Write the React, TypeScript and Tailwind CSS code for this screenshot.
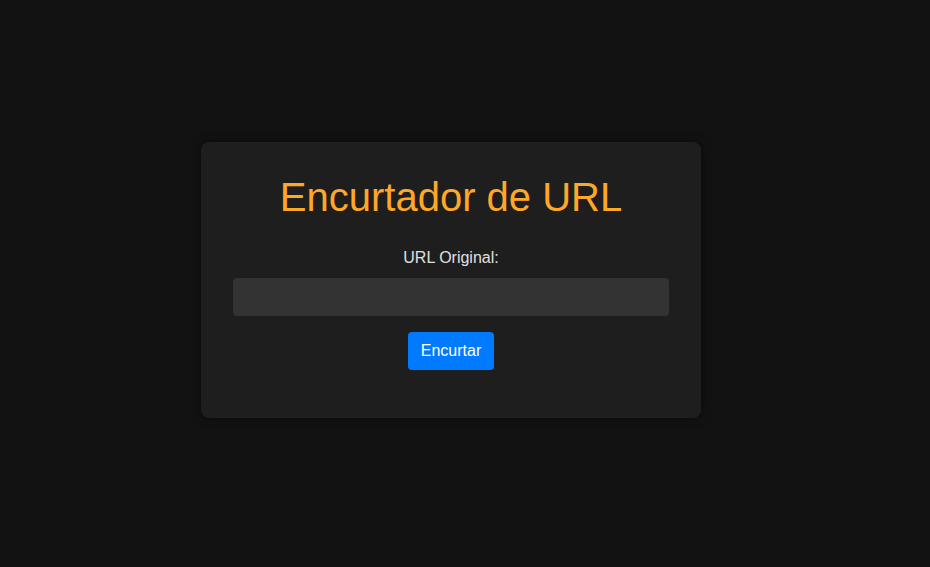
import React, { useState } from 'react';

const UrlShortener: React.FC = () => {
  const [url, setUrl] = useState('');

  return (
    <div className="w-[500px] rounded-lg bg-[#1e1e1e] px-8 pt-8 pb-12 text-center shadow-[0_0_10px_rgba(0,0,0,0.5)]">
      <h1 className="text-[40px] leading-[46px] text-[#ffa726]">Encurtador de URL</h1>
      <form className="mt-[29px] flex flex-col items-center" onSubmit={(e) => e.preventDefault()}>
        <label htmlFor="url" className="text-base leading-[18px] text-[#e0e0e0]">
          URL Original:
        </label>
        <input
          id="url"
          type="text"
          value={url}
          onChange={(e) => setUrl(e.target.value)}
          className="mt-[11px] h-[38px] w-full rounded bg-[#333333] px-2.5 text-base text-white outline-none"
        />
        <button
          type="submit"
          className="mt-4 h-[38px] rounded bg-[#007bff] px-[13px] text-base leading-[18px] text-white"
        >
          Encurtar
        </button>
      </form>
    </div>
  );
};

export default function App() {
  return (
    <div className="min-h-screen bg-[#121212] pt-[142px] pl-[201px] font-['Liberation_Sans',Arial,sans-serif]">
      <UrlShortener />
    </div>
  );
}
